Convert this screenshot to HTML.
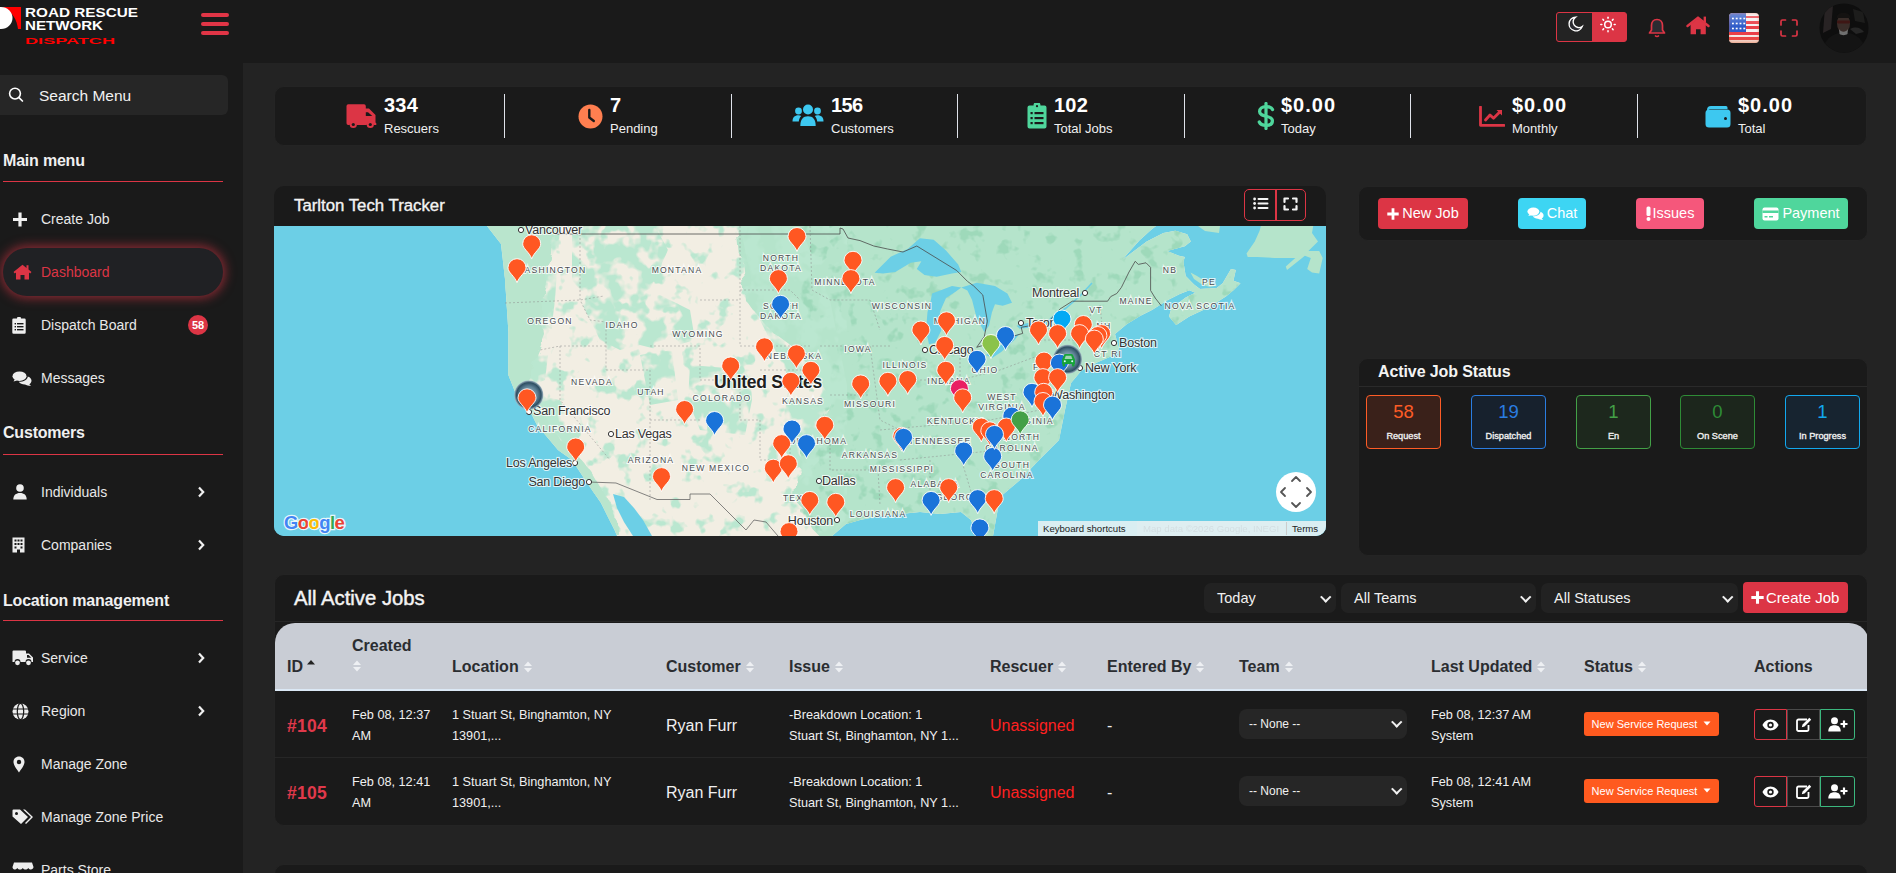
<!DOCTYPE html>
<html><head><meta charset="utf-8">
<style>
*{box-sizing:border-box;margin:0;padding:0}
html,body{width:1896px;height:873px;overflow:hidden;background:#232323;font-family:"Liberation Sans",sans-serif;color:#fff}
.abs{position:absolute}
#header{position:absolute;left:0;top:0;width:1896px;height:63px;background:#1a1a1a}
#sidebar{position:absolute;left:0;top:63px;width:243px;height:810px;background:#1a1a1a}
.card{position:absolute;background:#1a1a1a;border-radius:10px;border:1px solid #242424}
.si{position:absolute;left:41px;font-size:14px;color:#e8e8e8;line-height:16px;white-space:nowrap}
.sic{position:absolute;fill:#eaeaea}
.sh{position:absolute;left:3px;font-size:16px;font-weight:bold;color:#f0f0f0;line-height:18px;white-space:nowrap;letter-spacing:-0.2px}
.sl{position:absolute;left:3px;width:220px;height:1px;background:#dc3545}
.chev{position:absolute;left:197px;width:8px;height:12px;fill:none;stroke:#f0f0f0;stroke-width:2.2}

.vd{position:absolute;top:94px;width:1.2px;height:44px;background:#dfe2ea}
.sn{position:absolute;top:95px;font-size:20px;font-weight:bold;line-height:20px;color:#fff;white-space:nowrap;letter-spacing:0.2px}
.sb{position:absolute;top:121px;font-size:13px;line-height:16px;color:#f0f0f0;white-space:nowrap}
.btn{position:absolute;top:198px;height:31px;border-radius:4px;font-size:14.5px;line-height:31px;color:#fff;white-space:nowrap;display:flex;align-items:center;justify-content:center}
.jb{position:absolute;top:395px;width:75px;height:54px;border:1.5px solid;border-radius:4px;text-align:center}
.jb b{display:block;font-weight:normal;font-size:18.5px;line-height:18px;margin-top:7px}
.jb i{display:block;font-style:normal;font-size:9.2px;line-height:12px;margin-top:9px;color:#f0f0f0;font-weight:normal;-webkit-text-stroke:0.35px #f0f0f0}
.sel{position:absolute;top:583px;height:30px;background:#222;border-radius:7px;font-size:14.5px;line-height:30px;color:#f0f0f0;padding-left:13px;white-space:nowrap}
.sel:after,.tsel:after{content:"";position:absolute;right:7px;top:10px;width:5.5px;height:5.5px;border-right:2.2px solid #f0f0f0;border-bottom:2.2px solid #f0f0f0;transform:rotate(45deg)}
.th{position:absolute;top:658px;font-size:16px;font-weight:bold;line-height:18px;color:#2b2d31;white-space:nowrap}
.srt{position:absolute;width:10px;height:14px}
.srt2{display:inline-block;width:10px;height:14px;margin-left:4px;vertical-align:-2px}
.up{display:inline-block;width:10px;height:6px;margin-left:3px;vertical-align:7px}
.rid{position:absolute;left:287px;font-size:17.5px;letter-spacing:0.3px;font-weight:bold;line-height:22px;color:#e0394b;white-space:nowrap}
.r1{position:absolute;font-size:16px;line-height:20px;color:#f0f0f0;white-space:nowrap}
.r2{position:absolute;font-size:12.7px;line-height:21px;color:#f0f0f0;white-space:nowrap}
.tsel{position:absolute;left:1239px;width:168px;height:30px;background:#262626;border-radius:8px;font-size:12px;line-height:30px;color:#f0f0f0;padding-left:10px;white-space:nowrap}
.tsel:after{top:9px}
.stb{position:absolute;left:1584px;width:135px;height:24px;background:#ff5a1f;border-radius:3px;font-size:11px;line-height:24px;color:#fff;white-space:nowrap;text-align:center}
.act{position:absolute;left:1754px;width:101px;height:31px}
.ab{position:absolute;top:0;height:31px;border:1.2px solid;display:flex;align-items:center;justify-content:center}
.act .ab:first-child{border-radius:3px 0 0 3px}
.act .ab:last-child{border-radius:0 3px 3px 0}
</style></head><body>
<div id="header">
  <!-- logo -->
  <svg class="abs" style="left:0;top:0" width="150" height="50" viewBox="0 0 150 50">
    <path d="M2 7 L21 7 L21 29 L18 29 C17 20 13 12 2 7 Z" fill="#ff0000"/>
    <ellipse cx="1" cy="18" rx="11.5" ry="11" fill="#fff"/>
    <text x="25" y="17.3" font-family="Liberation Sans" font-weight="bold" font-size="13.6" fill="#fff" textLength="113" lengthAdjust="spacingAndGlyphs">ROAD RESCUE</text>
    <text x="25" y="30.3" font-family="Liberation Sans" font-weight="bold" font-size="13.6" fill="#fff" textLength="78" lengthAdjust="spacingAndGlyphs">NETWORK</text>
    <text x="25" y="43.5" font-family="Liberation Sans" font-weight="bold" font-size="9" fill="#ff0000" textLength="90" lengthAdjust="spacingAndGlyphs">DISPATCH</text>
  </svg>
  <!-- hamburger -->
  <div class="abs" style="left:201px;top:13px;width:28px;height:4px;background:#e03546;border-radius:2px"></div>
  <div class="abs" style="left:201px;top:22px;width:28px;height:4px;background:#e03546;border-radius:2px"></div>
  <div class="abs" style="left:201px;top:31px;width:28px;height:4px;background:#e03546;border-radius:2px"></div>
  <!-- theme toggle -->
  <div class="abs" style="left:1556px;top:12px;width:71px;height:30px;border:1px solid #dc3545;border-radius:3px;overflow:hidden;background:#dc3545">
    <div class="abs" style="left:0;top:0;width:35px;height:28px;background:#232323"></div>
    <svg class="abs" style="left:9px;top:2px" width="18" height="18" viewBox="0 0 18 18"><path d="M9.5 2.2 A6.8 6.8 0 1 0 16.2 11.5 A5.6 5.6 0 0 1 9.5 2.2 Z" fill="#2b2b31" stroke="#fff" stroke-width="1.4"/></svg>
    <svg class="abs" style="left:41px;top:2px" width="20" height="20" viewBox="0 0 20 20"><circle cx="10" cy="9.5" r="3.3" fill="none" stroke="#fff" stroke-width="1.5"/><g stroke="#fff" stroke-width="1.5" stroke-linecap="round"><path d="M10 2.3v1"/><path d="M10 15.7v1"/><path d="M2.8 9.5h1"/><path d="M16.2 9.5h1"/><path d="M4.9 4.4l.7.7"/><path d="M14.4 13.9l.7.7"/><path d="M4.9 14.6l.7-.7"/><path d="M14.4 5.1l.7-.7"/></g></svg>
  </div>
  <!-- bell -->
  <svg class="abs" style="left:1647px;top:17px" width="20" height="22" viewBox="0 0 20 22"><path d="M10 2.5 C6.3 2.5 4.5 5.2 4.5 8.5 L4.5 13 L2.5 16 L17.5 16 L15.5 13 L15.5 8.5 C15.5 5.2 13.7 2.5 10 2.5 Z" fill="#2b2b31" stroke="#dc3545" stroke-width="1.7" stroke-linejoin="round"/><path d="M8 18.5 Q10 20.5 12 18.5" fill="none" stroke="#dc3545" stroke-width="1.5"/></svg>
  <!-- home -->
  <svg class="abs" style="left:1686px;top:15px" width="24" height="21" viewBox="0 0 24 21"><path d="M1.5 11 L12 2.6 L22.5 11" fill="none" stroke="#dc3545" stroke-width="2.4" stroke-linecap="round" stroke-linejoin="round"/><path d="M4.6 9.2 L12 3.6 L19.8 9.2 V19.2 H14.6 V14.2 H10 V19.2 H4.6 Z" fill="#dc3545"/><rect x="17.6" y="1.6" width="2.4" height="6" fill="#dc3545"/></svg>
  <!-- flag -->
  <div class="abs" style="left:1729px;top:13px;width:30px;height:30px;border-radius:4px;overflow:hidden;background:repeating-linear-gradient(180deg,#f5f2f2 0 2.7px,#ea3f48 2.7px 5.4px)">
    <div class="abs" style="left:0;top:0;width:17px;height:19px;background:#2f5cc9"></div>
    <div class="abs" style="left:1.5px;top:3px;width:15px;height:14px;background:radial-gradient(circle,#fff 0.9px,transparent 1.2px) 0 0/3.8px 5px"></div>
    <div class="abs" style="left:0;top:0;width:30px;height:30px;background:linear-gradient(180deg,rgba(255,255,255,.3),rgba(255,255,255,0) 45%,rgba(0,0,0,0) 70%,rgba(230,110,60,.35));box-shadow:inset 0 0 3px rgba(230,100,60,.6)"></div>
  </div>
  <!-- fullscreen -->
  <svg class="abs" style="left:1780px;top:19px" width="18" height="18" viewBox="0 0 18 18"><path d="M1 6 V2.5 Q1 1 2.5 1 H5.5 M12.5 1 H15.5 Q17 1 17 2.5 V6 M17 12 V15.5 Q17 17 15.5 17 H12.5 M5.5 17 H2.5 Q1 17 1 15.5 V12" fill="none" stroke="#dc3545" stroke-width="1.7" stroke-linecap="round"/></svg>
  <!-- avatar -->
  <svg class="abs" style="left:1819px;top:3px" width="50" height="50" viewBox="0 0 50 50">
    <defs><clipPath id="av"><circle cx="25" cy="25" r="24.5"/></clipPath></defs>
    <g clip-path="url(#av)">
      <rect width="50" height="50" fill="#0e0e0e"/>
      <path d="M6 4 L14 2 L12 26 L4 30 Z" fill="#2b2627" opacity=".9"/>
      <path d="M34 6 L44 9 L46 20 L36 18 Z" fill="#1d1d1c"/>
      <path d="M3 50 C4 37 13 30 25 29 C37 30 46 37 47 50 Z" fill="#141414"/>
      <path d="M31 26 C37 23 42 25 45 29 L37 31 Z" fill="#262626"/>
      <ellipse cx="24.5" cy="20.5" rx="6.5" ry="9.5" fill="#3a2d29"/>
      <path d="M18 13 C19 8.5 30 8.5 31 13 L31 15 L18 15 Z" fill="#141211"/>
      <rect x="18" y="17.5" width="13" height="3" rx="1.2" fill="#3e1614"/>
      <path d="M20 26 C22 29.5 27 29.5 29 26 L28.5 31 C26.5 32.5 22.5 32.5 20.5 31 Z" fill="#707070"/>
    </g>
  </svg>
</div>
<div id="sidebar"></div>
<!-- sidebar content (absolute to page) -->
<div class="abs" style="left:0;top:75px;width:228px;height:40px;background:#262626;border-radius:0 6px 6px 0"></div>
<svg class="abs" style="left:8px;top:87px" width="16" height="15" viewBox="0 0 16 15"><circle cx="7" cy="6.6" r="5.4" fill="none" stroke="#fff" stroke-width="1.6"/><path d="M11 10.6 L14.4 14" stroke="#fff" stroke-width="1.7" stroke-linecap="round"/></svg>
<div class="abs" style="left:39px;top:87px;font-size:15.5px;line-height:18px;color:#f2f2f2;white-space:nowrap">Search Menu</div>

<div class="sh" style="top:152px">Main menu</div>
<div class="sl" style="top:181px"></div>

<svg class="sic" style="left:12px;top:212px" width="16" height="15" viewBox="0 0 16 15"><path d="M6.4 0.5h3.2v5.4H15v3.2H9.6v5.4H6.4V9.1H1V5.9h5.4z" fill="#f0f0f0"/></svg>
<div class="si" style="top:211px">Create Job</div>

<div class="abs" style="left:3px;top:248px;width:220px;height:48px;border-radius:24px;background:#202124;box-shadow:0 0 11px 2px rgba(220,53,69,.62)"></div>
<svg class="sic" style="left:13px;top:264px" width="19" height="16" viewBox="0 0 19 16"><path d="M9.5 0.8 L0.5 8 L1.8 9.5 L3 8.6 L3 15.5 L7.5 15.5 L7.5 11 L11.5 11 L11.5 15.5 L16 15.5 L16 8.6 L17.2 9.5 L18.5 8 L15.5 5.6 L15.5 1.2 L13.5 1.2 L13.5 4 Z" fill="#dc3545"/></svg>
<div class="si" style="top:264px;color:#dc3545">Dashboard</div>

<svg class="sic" style="left:12px;top:317px" width="14" height="17" viewBox="0 0 14 17"><path d="M5 1.5 A2 2 0 0 1 9 1.5 H12.5 A1.2 1.2 0 0 1 13.7 2.7 V15.6 A1.2 1.2 0 0 1 12.5 16.8 H1.5 A1.2 1.2 0 0 1 0.3 15.6 V2.7 A1.2 1.2 0 0 1 1.5 1.5 Z" fill="#eee"/><g fill="#1a1a1a"><rect x="2.6" y="6" width="1.4" height="1.4"/><rect x="5" y="6" width="6.5" height="1.4"/><rect x="2.6" y="9" width="1.4" height="1.4"/><rect x="5" y="9" width="6.5" height="1.4"/><rect x="2.6" y="12" width="1.4" height="1.4"/><rect x="5" y="12" width="6.5" height="1.4"/></g></svg>
<div class="si" style="top:317px">Dispatch Board</div>
<div class="abs" style="left:188px;top:315px;width:20px;height:20px;border-radius:10px;background:#dc3545;font-size:11px;font-weight:bold;line-height:20px;text-align:center;color:#fff">58</div>

<svg class="sic" style="left:12px;top:371px" width="20" height="15" viewBox="0 0 20 15"><ellipse cx="7.5" cy="5.2" rx="7" ry="4.8" fill="#eee"/><path d="M1.5 10.5 L3 8 L5 9.5 Z" fill="#eee"/><path d="M15.8 5.5 C18.5 6.5 19.7 8.2 19.5 10 C19.3 11.6 18.3 12.7 17.3 13.3 L19 15 C16.5 15 14.5 14.4 13 13.6 C10.5 13.7 8 12.5 6.8 10.8 C12 10.8 15.8 8.5 15.8 5.5 Z" fill="#eee"/></svg>
<div class="si" style="top:370px">Messages</div>

<div class="sh" style="top:424px">Customers</div>
<div class="sl" style="top:454px"></div>

<svg class="sic" style="left:13px;top:484px" width="14" height="16" viewBox="0 0 14 16"><circle cx="7" cy="4" r="3.8" fill="#eee"/><path d="M0.3 15.6 C0.3 11 3 9 7 9 C11 9 13.7 11 13.7 15.6 Z" fill="#eee"/></svg>
<div class="si" style="top:484px">Individuals</div>
<svg class="chev" style="top:486px" viewBox="0 0 8 12"><path d="M2 1.5 L6.2 6 L2 10.5"/></svg>

<svg class="sic" style="left:12px;top:537px" width="13" height="16" viewBox="0 0 13 16"><path d="M0.5 0.5 H12.5 V15.5 H8 V12.5 H5 V15.5 H0.5 Z" fill="#eee"/><g fill="#1a1a1a"><rect x="2.5" y="2.5" width="2" height="2"/><rect x="8.5" y="2.5" width="2" height="2"/><rect x="5.5" y="2.5" width="2" height="2"/><rect x="2.5" y="6" width="2" height="2"/><rect x="5.5" y="6" width="2" height="2"/><rect x="8.5" y="6" width="2" height="2"/><rect x="2.5" y="9.5" width="2" height="2"/><rect x="8.5" y="9.5" width="2" height="2"/></g></svg>
<div class="si" style="top:537px">Companies</div>
<svg class="chev" style="top:539px" viewBox="0 0 8 12"><path d="M2 1.5 L6.2 6 L2 10.5"/></svg>

<div class="sh" style="top:592px">Location management</div>
<div class="sl" style="top:620px"></div>

<svg class="sic" style="left:12px;top:650px" width="22" height="16" viewBox="0 0 22 16"><path d="M0.5 1.5 A1 1 0 0 1 1.5 0.5 H13 A1 1 0 0 1 14 1.5 V3.5 H17 L21 7.5 V12 H19.5 A3 3 0 0 0 13.5 12 H8.5 A3 3 0 0 0 2.5 12 H0.5 Z" fill="#eee"/><circle cx="5.5" cy="12.8" r="2.4" fill="#eee"/><circle cx="16.5" cy="12.8" r="2.4" fill="#eee"/><path d="M15 5 H16.6 L19.3 7.7 H15 Z" fill="#1a1a1a"/></svg>
<div class="si" style="top:650px">Service</div>
<svg class="chev" style="top:652px" viewBox="0 0 8 12"><path d="M2 1.5 L6.2 6 L2 10.5"/></svg>

<svg class="sic" style="left:12px;top:703px" width="17" height="17" viewBox="0 0 17 17"><circle cx="8.5" cy="8.5" r="8" fill="#eee"/><g fill="none" stroke="#1a1a1a" stroke-width="1.2"><ellipse cx="8.5" cy="8.5" rx="3.2" ry="8"/><path d="M0.5 6 H16.5 M0.5 11 H16.5"/></g></svg>
<div class="si" style="top:703px">Region</div>
<svg class="chev" style="top:705px" viewBox="0 0 8 12"><path d="M2 1.5 L6.2 6 L2 10.5"/></svg>

<svg class="sic" style="left:13px;top:756px" width="12" height="17" viewBox="0 0 12 17"><path d="M6 0.5 C9.2 0.5 11.5 2.8 11.5 6 C11.5 9.5 7.5 14 6 16.5 C4.5 14 0.5 9.5 0.5 6 C0.5 2.8 2.8 0.5 6 0.5 Z" fill="#eee"/><circle cx="6" cy="6" r="2.2" fill="#1a1a1a"/></svg>
<div class="si" style="top:756px">Manage Zone</div>

<svg class="sic" style="left:12px;top:809px" width="22" height="16" viewBox="0 0 22 16"><path d="M0.5 1.5 A1 1 0 0 1 1.5 0.5 H8 L16 8 L9 15 L0.5 7.5 Z" fill="#eee"/><circle cx="4.5" cy="4.5" r="1.5" fill="#1a1a1a"/><path d="M11 0.5 H13 L21 8 L14 15 L13 14 L19 8 Z" fill="#eee"/></svg>
<div class="si" style="top:809px">Manage Zone Price</div>

<svg class="sic" style="left:12px;top:862px" width="22" height="14" viewBox="0 0 22 14"><path d="M2 0.5 H20 L21.5 5 C21.5 6.5 20 7.5 19 7.5 C18 7.5 17 7 16.3 6 C15.5 7 14.5 7.5 13.5 7.5 C12.5 7.5 11.5 7 10.8 6 C10 7 9 7.5 8 7.5 C7 7.5 6 7 5.3 6 C4.5 7 3.5 7.5 2.5 7.5 C1.5 7.5 0.5 6.5 0.5 5 Z" fill="#eee"/></svg>
<div class="si" style="top:862px">Parts Store</div>

<!-- MAIN -->
<!-- STATS -->
<div class="card" style="left:274px;top:86px;width:1593px;height:60px"></div>
<div class="vd" style="left:504px"></div><div class="vd" style="left:731px"></div><div class="vd" style="left:957px"></div><div class="vd" style="left:1184px"></div><div class="vd" style="left:1410px"></div><div class="vd" style="left:1637px"></div>

<svg class="abs" style="left:346px;top:104px" width="31" height="25" viewBox="0 0 31 25"><path d="M0.5 2 A1.8 1.8 0 0 1 2.3 0.3 H18 A1.8 1.8 0 0 1 19.8 2 V4.5 H23 L29.5 11 V18.5 L30.3 19.2 V21 H28 A4 4 0 0 0 20.5 21 H11 A4 4 0 0 0 3.5 21 H2.3 A1.8 1.8 0 0 1 0.5 19.2 Z" fill="#dc3545"/><circle cx="7.3" cy="20.5" r="3.6" fill="#dc3545"/><circle cx="24.3" cy="20.5" r="3.6" fill="#dc3545"/><circle cx="7.3" cy="20.5" r="1.6" fill="#1a1a1a"/><circle cx="24.3" cy="20.5" r="1.6" fill="#1a1a1a"/><path d="M19.8 8.3 H22 L26.3 12 H19.8 Z" fill="#1a1a1a"/></svg>
<div class="sn" style="left:384px">334</div><div class="sb" style="left:384px">Rescuers</div>

<svg class="abs" style="left:578px;top:104px" width="25" height="25" viewBox="0 0 25 25"><circle cx="12.5" cy="12.5" r="12" fill="#ff7f50"/><path d="M11.3 6 V13.5 L15.8 17" fill="none" stroke="#1a1a1a" stroke-width="2.4" stroke-linecap="round" stroke-linejoin="round"/></svg>
<div class="sn" style="left:610px">7</div><div class="sb" style="left:610px">Pending</div>

<svg class="abs" style="left:792px;top:104px" width="32" height="23" viewBox="0 0 32 23"><circle cx="16" cy="5.5" r="5" fill="#3dc8f0"/><circle cx="6.5" cy="7" r="3.4" fill="#3dc8f0"/><circle cx="25.5" cy="7" r="3.4" fill="#3dc8f0"/><path d="M8.3 22 C8.3 15.5 11 12.3 16 12.3 C21 12.3 23.7 15.5 23.7 22 Z" fill="#3dc8f0"/><path d="M0.5 17.5 C0.5 13.5 2.5 11.3 6.5 11.3 C7.7 11.3 8.5 11.6 9.2 12 C7.6 13.8 7 15.5 6.8 17.5 Z" fill="#3dc8f0"/><path d="M31.5 17.5 C31.5 13.5 29.5 11.3 25.5 11.3 C24.3 11.3 23.5 11.6 22.8 12 C24.4 13.8 25 15.5 25.2 17.5 Z" fill="#3dc8f0"/></svg>
<div class="sn" style="left:831px;letter-spacing:-0.6px">156</div><div class="sb" style="left:831px">Customers</div>

<svg class="abs" style="left:1027px;top:103px" width="20" height="26" viewBox="0 0 20 26"><path d="M6.5 2.5 A3.5 3.5 0 0 1 13.5 2.5 H17.5 A2 2 0 0 1 19.5 4.5 V23.5 A2 2 0 0 1 17.5 25.5 H2.5 A2 2 0 0 1 0.5 23.5 V4.5 A2 2 0 0 1 2.5 2.5 Z" fill="#4fd69c"/><g fill="#1a1a1a"><circle cx="10" cy="3.2" r="1.1"/><rect x="3.5" y="9" width="2.2" height="2.2"/><rect x="7.5" y="9" width="9" height="2.2"/><rect x="3.5" y="14" width="2.2" height="2.2"/><rect x="7.5" y="14" width="9" height="2.2"/><rect x="3.5" y="19" width="2.2" height="2.2"/><rect x="7.5" y="19" width="9" height="2.2"/></g></svg>
<div class="sn" style="left:1054px">102</div><div class="sb" style="left:1054px">Total Jobs</div>

<svg class="abs" style="left:1257px;top:102px" width="18" height="28" viewBox="0 0 18 28"><path d="M9 1.5 V26.5" stroke="#4fd69c" stroke-width="3.2" stroke-linecap="round"/><path d="M15.5 7.5 C14.5 5.5 12 4.7 9 4.7 C5 4.7 2.6 6.6 2.6 9.5 C2.6 16 15.4 12.5 15.4 18.8 C15.4 21.8 12.8 23.4 9 23.4 C5.8 23.4 3.3 22.3 2.3 20" fill="none" stroke="#4fd69c" stroke-width="3.3" stroke-linecap="round"/></svg>
<div class="sn" style="left:1281px;letter-spacing:1px">$0.00</div><div class="sb" style="left:1281px">Today</div>

<svg class="abs" style="left:1479px;top:106px" width="26" height="21" viewBox="0 0 26 21"><path d="M1.5 1 V19.3 H25" fill="none" stroke="#dc3545" stroke-width="2.8" stroke-linecap="round" stroke-linejoin="round"/><path d="M6.5 14 L11 9 L14.5 12.3 L21 5.8" fill="none" stroke="#dc3545" stroke-width="2.8" stroke-linecap="round" stroke-linejoin="round"/><path d="M17.5 4 H23 V9.5 Z" fill="#dc3545"/></svg>
<div class="sn" style="left:1512px;letter-spacing:1px">$0.00</div><div class="sb" style="left:1512px">Monthly</div>

<svg class="abs" style="left:1705px;top:105px" width="26" height="23" viewBox="0 0 26 23"><path d="M2 5 Q2 1 6 1 H21 Q22.5 1 22.5 2.5 V4 H5 Q3.5 4 3.5 5.5" fill="#3dc8f0"/><rect x="0.5" y="4.5" width="25" height="18" rx="3.5" fill="#3dc8f0"/><circle cx="20.5" cy="13.5" r="1.5" fill="#1a1a1a"/></svg>
<div class="sn" style="left:1738px;letter-spacing:1px">$0.00</div><div class="sb" style="left:1738px">Total</div>

<!-- MAP CARD -->
<div class="card" style="left:274px;top:186px;width:1052px;height:350px;overflow:hidden;border:none">
  <div class="abs" style="left:20px;top:10px;font-size:16.8px;line-height:20px;color:#f4f4f4;white-space:nowrap;-webkit-text-stroke:0.35px #f4f4f4">Tarlton Tech Tracker</div>
  <div class="abs" style="left:970px;top:3px;width:62px;height:32px;border:1.5px solid #dc3545;border-radius:5px"></div>
  <div class="abs" style="left:1001px;top:3px;width:1.5px;height:32px;background:#dc3545"></div>
  <svg class="abs" style="left:979px;top:11px" width="16" height="13" viewBox="0 0 16 13"><g fill="#f4f4f4"><circle cx="1.6" cy="2" r="1.4"/><circle cx="1.6" cy="6.5" r="1.4"/><circle cx="1.6" cy="11" r="1.4"/><rect x="4.5" y="1" width="11" height="2" rx="1"/><rect x="4.5" y="5.5" width="11" height="2" rx="1"/><rect x="4.5" y="10" width="11" height="2" rx="1"/></g></svg>
  <svg class="abs" style="left:1009px;top:11px" width="15" height="14" viewBox="0 0 15 14"><path d="M1.5 5 V1.5 H5 M10 1.5 H13.5 V5 M13.5 9 V12.5 H10 M5 12.5 H1.5 V9" fill="none" stroke="#f4f4f4" stroke-width="2.2" stroke-linecap="round" stroke-linejoin="round"/></svg>
  <div id="map" class="abs" style="left:0;top:40px;width:1052px;height:310px;background:#6ccfe6;overflow:hidden">
    <svg width="1052" height="310" viewBox="274 226 1052 310" style="position:absolute;left:0;top:0">
<defs><clipPath id="landclip"><path d="M487.0 226.0 L1156.0 226.0 L1151.5 229.6 L1139.6 240.3 L1127.7 253.4 L1113.4 271.3 L1100.0 279.0 L1092.0 282.0 L1115.7 265.3 L1132.4 252.2 L1146.7 241.5 L1163.4 233.1 L1175.3 230.8 L1187.2 234.3 L1190.8 241.5 L1184.8 246.3 L1167.0 251.0 L1178.9 255.8 L1184.8 257.0 L1183.4 261.7 L1185.7 276.0 L1194.0 284.4 L1200.0 289.0 L1216.7 288.0 L1222.7 283.2 L1231.0 268.9 L1235.8 270.0 L1233.4 280.8 L1240.5 283.2 L1233.4 290.3 L1226.2 296.3 L1209.6 307.0 L1189.3 316.5 L1176.2 324.9 L1169.0 316.5 L1171.4 308.2 L1185.7 297.5 L1195.3 292.7 L1189.3 290.3 L1179.8 293.9 L1167.9 299.9 L1160.7 304.6 L1152.0 310.0 L1140.0 316.0 L1127.0 324.0 L1115.0 334.0 L1119.0 349.0 L1112.0 356.0 L1098.0 362.0 L1081.0 371.0 L1071.0 383.0 L1065.0 410.0 L1059.0 440.0 L1053.0 446.0 L1040.0 459.0 L1020.0 480.0 L1000.0 497.0 L993.0 536.0 L977.0 536.0 L971.0 520.0 L961.0 512.0 L940.0 514.0 L920.0 512.0 L900.0 514.0 L880.0 516.0 L860.0 520.0 L846.0 524.0 L832.0 536.0 L617.0 536.0 L615.0 531.0 L601.0 503.0 L586.5 482.0 L572.0 460.0 L558.0 450.0 L537.0 425.0 L530.0 411.0 L515.5 393.0 L508.4 375.0 L508.4 332.0 L505.0 279.0 L501.0 244.0 Z"/></clipPath><clipPath id="mtn"><path d="M572 226 L655 226 L668 250 L650 290 L690 310 L695 340 L660 350 L640 345 L620 350 L600 340 L585 310 L572 280 Z"/><path d="M690 365 L750 370 L752 400 L745 435 L700 430 L688 400 Z"/><path d="M640 355 L672 350 L678 400 L650 405 Z"/><path d="M540 395 L560 400 L580 440 L575 455 L555 450 L538 420 Z"/><path d="M740 226 L800 226 L830 300 L850 400 L830 450 L800 480 L780 440 L790 380 L760 320 Z"/><path d="M505 226 L560 226 L555 300 L545 380 L520 390 L505 300 Z"/></clipPath><filter id="motD" x="0" y="0" width="1" height="1" color-interpolation-filters="sRGB"><feTurbulence type="fractalNoise" baseFrequency="0.07" numOctaves="3" seed="21"/><feColorMatrix type="matrix" values="0 0 0 0 0.62  0 0 0 0 0.85  0 0 0 0 0.73  0 0 0 7 -4.1"/></filter><filter id="motS" x="0" y="0" width="1" height="1" color-interpolation-filters="sRGB"><feTurbulence type="fractalNoise" baseFrequency="0.06" numOctaves="3" seed="11"/><feColorMatrix type="matrix" values="0 0 0 0 0.73  0 0 0 0 0.905  0 0 0 0 0.815  0 0 0 8 -4.6"/></filter><filter id="mot" x="0" y="0" width="1" height="1" color-interpolation-filters="sRGB"><feTurbulence type="fractalNoise" baseFrequency="0.05" numOctaves="3" seed="4"/><feColorMatrix type="matrix" values="0 0 0 0 0.73  0 0 0 0 0.905  0 0 0 0 0.815  0 0 0 7 -3.0"/></filter><filter id="mot2" x="-0.1" y="-0.1" width="1.2" height="1.2"><feTurbulence type="fractalNoise" baseFrequency="0.06" numOctaves="2" seed="9" result="n"/><feDisplacementMap in="SourceGraphic" in2="n" scale="16"/></filter><radialGradient id="clg" cx="0.5" cy="0.5" r="0.5"><stop offset="0" stop-color="#b7d0dc"/><stop offset="0.6" stop-color="#5c7f93"/><stop offset="0.85" stop-color="#2e4f63"/><stop offset="1" stop-color="#9fb6c2"/></radialGradient></defs>
<rect x="274" y="226" width="1052" height="310" fill="#6ccfe6"/>
<path d="M487.0 226.0 L1156.0 226.0 L1151.5 229.6 L1139.6 240.3 L1127.7 253.4 L1113.4 271.3 L1100.0 279.0 L1092.0 282.0 L1115.7 265.3 L1132.4 252.2 L1146.7 241.5 L1163.4 233.1 L1175.3 230.8 L1187.2 234.3 L1190.8 241.5 L1184.8 246.3 L1167.0 251.0 L1178.9 255.8 L1184.8 257.0 L1183.4 261.7 L1185.7 276.0 L1194.0 284.4 L1200.0 289.0 L1216.7 288.0 L1222.7 283.2 L1231.0 268.9 L1235.8 270.0 L1233.4 280.8 L1240.5 283.2 L1233.4 290.3 L1226.2 296.3 L1209.6 307.0 L1189.3 316.5 L1176.2 324.9 L1169.0 316.5 L1171.4 308.2 L1185.7 297.5 L1195.3 292.7 L1189.3 290.3 L1179.8 293.9 L1167.9 299.9 L1160.7 304.6 L1152.0 310.0 L1140.0 316.0 L1127.0 324.0 L1115.0 334.0 L1119.0 349.0 L1112.0 356.0 L1098.0 362.0 L1081.0 371.0 L1071.0 383.0 L1065.0 410.0 L1059.0 440.0 L1053.0 446.0 L1040.0 459.0 L1020.0 480.0 L1000.0 497.0 L993.0 536.0 L977.0 536.0 L971.0 520.0 L961.0 512.0 L940.0 514.0 L920.0 512.0 L900.0 514.0 L880.0 516.0 L860.0 520.0 L846.0 524.0 L832.0 536.0 L617.0 536.0 L615.0 531.0 L601.0 503.0 L586.5 482.0 L572.0 460.0 L558.0 450.0 L537.0 425.0 L530.0 411.0 L515.5 393.0 L508.4 375.0 L508.4 332.0 L505.0 279.0 L501.0 244.0 Z" fill="#f2eee3"/>
<g clip-path="url(#landclip)">
<path d="M736.0 200.0 L1360.0 200.0 L1360.0 570.0 L822.0 570.0 L818.0 536.0 L796.0 500.0 L800.0 450.0 L826.0 410.0 L828.0 395.0 L800.0 352.0 L770.0 330.0 L745.0 300.0 L738.0 226.0 Z" fill="#b5e4cb" filter="url(#mot2)"/>
<rect x="487" y="226" width="360" height="310" fill="#fff" filter="url(#motS)"/>
<rect x="800" y="226" width="526" height="310" fill="#fff" filter="url(#motD)"/>
<g clip-path="url(#mtn)"><rect x="487" y="226" width="360" height="310" fill="#fff" filter="url(#mot)"/></g>
<path d="M487 226 L560 226 L552 250 L545 275 L540 300 L545 335 L535 360 L528 380 L535 400 L548 420 L560 440 L575 452 L590 470 L602 490 L612 510 L620 536 L600 536 L586 500 L570 478 L550 462 L530 440 L515 415 L505 390 L500 300 Z" fill="#b9e5cd" filter="url(#mot2)"/>
</g>
<path d="M1246.5 253.4 L1254.8 241.5 L1259.6 230.8 L1260.8 226.0 L1313.2 226.0 L1312.0 233.0 L1318.0 241.5 L1308.4 251.0 L1319.2 251.0 L1322.7 258.0 L1319.2 273.6 L1312.0 272.5 L1307.2 268.9 L1310.8 258.0 L1304.9 255.8 L1287.0 270.0 L1285.8 266.5 L1295.3 258.0 L1275.0 258.0 L1257.2 257.0 L1247.7 257.0 Z" fill="#b5e4cb"/>
<path d="M1198.0 226.0 L1220.0 226.0 L1219.0 233.0 L1205.0 231.0 Z" fill="#b5e4cb"/>
<path d="M1190.5 272.5 L1197.0 276.0 L1205.0 281.0 L1212.0 283.0 L1217.0 285.6 L1210.0 287.0 L1202.0 284.5 L1194.0 279.0 Z" fill="#b5e4cb"/>
<path d="M613.0 494.0 L624.0 497.0 L634.0 508.0 L643.0 520.0 L652.0 536.0 L633.0 536.0 L624.0 522.0 L617.0 508.0 Z" fill="#6ccfe6"/>
<path d="M874.6 272.8 L890.7 256.7 L907.6 249.0 L919.9 238.3 L933.7 239.8 L946.0 250.6 L958.2 264.4 L961.3 272.0 L952.0 273.6 L936.7 276.7 L924.5 275.0 L916.8 269.0 L921.4 261.3 L910.7 262.8 L895.3 272.0 L883.0 273.6 Z" fill="#6ccfe6"/>
<path d="M932.1 293.5 L952.0 285.9 L961.3 287.4 L955.2 292.0 L946.0 298.1 L939.8 312.0 L941.3 330.4 L935.2 342.7 L929.0 344.2 L926.0 330.4 L927.5 312.0 L930.6 301.2 Z" fill="#6ccfe6"/>
<path d="M961.3 287.4 L976.7 282.8 L995.0 285.9 L1007.4 293.5 L1012.0 302.7 L1002.7 305.8 L995.0 304.3 L992.0 312.0 L989.0 325.8 L984.3 331.9 L976.7 318.0 L972.0 299.7 L967.4 290.5 Z" fill="#6ccfe6"/>
<path d="M985.9 354.9 L998.0 347.3 L1013.5 336.5 L1019.6 333.4 L1015.0 339.6 L1001.2 351.9 L992.0 358.0 Z" fill="#6ccfe6"/>
<path d="M1016.6 325.8 L1028.8 322.7 L1044.2 321.2 L1053.4 318.1 L1050.3 324.2 L1033.4 327.3 L1019.6 328.8 Z" fill="#6ccfe6"/>
<path d="M1050 319 L1066 308 L1080 296 L1092 283" fill="none" stroke="#6ccfe6" stroke-width="1.6"/>
<path d="M555 234 L840 234 L840 228 L843 229 L848 238 L860 240.6 L873.8 246 L887.6 249 L903 252 L916.8 246 L956.7 270.5 L967.4 281.3 L973.6 285.9 L982.8 295 L987.4 321.2 L984.3 336.5 L976.7 347.3 L1022.7 333.4 L1021.2 327.3 L1034 325 L1050 320 L1060 309 L1072.3 301.2 L1107.6 301.2 L1110.7 296.6 L1116.8 293.5 L1121.4 287.4 L1129 272 L1135.2 261.3 L1138.3 264.4 L1146 262.8 L1150.6 267.4 L1150.6 290.5 L1155.2 298 L1161.3 305.8" fill="none" stroke="#4a4a4a" stroke-width="0.8"/>
<path d="M589 482 L616 483 L657 499.5 L690 499.5 L690 494 L710 494 L730 514 L746 530 L754 520 L766 522 L778 536" fill="none" stroke="#666" stroke-width="0.8"/>
<path d="M505 303 L580 300 L604 296" fill="none" stroke="#8a8a8a" stroke-width="0.7" stroke-dasharray="2 2" opacity="0.7"/>
<path d="M580 226 L580 300 L590 320 L606 322 L606 370" fill="none" stroke="#8a8a8a" stroke-width="0.7" stroke-dasharray="2 2" opacity="0.7"/>
<path d="M606 346 L560 346 L540 350" fill="none" stroke="#8a8a8a" stroke-width="0.7" stroke-dasharray="2 2" opacity="0.7"/>
<path d="M560 346 L560 400 L610 460" fill="none" stroke="#8a8a8a" stroke-width="0.7" stroke-dasharray="2 2" opacity="0.7"/>
<path d="M606 370 L650 370 L650 420" fill="none" stroke="#8a8a8a" stroke-width="0.7" stroke-dasharray="2 2" opacity="0.7"/>
<path d="M650 346 L700 346 L700 380 L740 380 L740 420 L760 420" fill="none" stroke="#8a8a8a" stroke-width="0.7" stroke-dasharray="2 2" opacity="0.7"/>
<path d="M740 226 L740 346" fill="none" stroke="#8a8a8a" stroke-width="0.7" stroke-dasharray="2 2" opacity="0.7"/>
<path d="M700 300 L740 300" fill="none" stroke="#8a8a8a" stroke-width="0.7" stroke-dasharray="2 2" opacity="0.7"/>
<path d="M740 290 L790 290 L800 300" fill="none" stroke="#8a8a8a" stroke-width="0.7" stroke-dasharray="2 2" opacity="0.7"/>
<path d="M740 346 L810 346" fill="none" stroke="#8a8a8a" stroke-width="0.7" stroke-dasharray="2 2" opacity="0.7"/>
<path d="M760 370 L820 370" fill="none" stroke="#8a8a8a" stroke-width="0.7" stroke-dasharray="2 2" opacity="0.7"/>
<path d="M700 420 L650 420 L650 500" fill="none" stroke="#8a8a8a" stroke-width="0.7" stroke-dasharray="2 2" opacity="0.7"/>
<path d="M760 420 L760 460 L790 460 L790 440 L830 440" fill="none" stroke="#8a8a8a" stroke-width="0.7" stroke-dasharray="2 2" opacity="0.7"/>
<path d="M830 395 L870 395" fill="none" stroke="#8a8a8a" stroke-width="0.7" stroke-dasharray="2 2" opacity="0.7"/>
<path d="M810 226 L812 290 L830 300 L870 300 L880 330" fill="none" stroke="#8a8a8a" stroke-width="0.7" stroke-dasharray="2 2" opacity="0.7"/>
<path d="M820 346 L890 346" fill="none" stroke="#8a8a8a" stroke-width="0.7" stroke-dasharray="2 2" opacity="0.7"/>
<path d="M870 346 L880 420 L900 430" fill="none" stroke="#8a8a8a" stroke-width="0.7" stroke-dasharray="2 2" opacity="0.7"/>
<path d="M830 440 L830 470 L870 470" fill="none" stroke="#8a8a8a" stroke-width="0.7" stroke-dasharray="2 2" opacity="0.7"/>
<path d="M880 430 L990 420 L1040 410" fill="none" stroke="#8a8a8a" stroke-width="0.7" stroke-dasharray="2 2" opacity="0.7"/>
<path d="M900 460 L1000 450" fill="none" stroke="#8a8a8a" stroke-width="0.7" stroke-dasharray="2 2" opacity="0.7"/>
<path d="M920 380 L960 380 L1000 370 L1040 355" fill="none" stroke="#8a8a8a" stroke-width="0.7" stroke-dasharray="2 2" opacity="0.7"/>
<path d="M960 346 L960 410" fill="none" stroke="#8a8a8a" stroke-width="0.7" stroke-dasharray="2 2" opacity="0.7"/>
<path d="M1040 340 L1090 340" fill="none" stroke="#8a8a8a" stroke-width="0.7" stroke-dasharray="2 2" opacity="0.7"/>
<path d="M1090 310 L1092 345" fill="none" stroke="#8a8a8a" stroke-width="0.7" stroke-dasharray="2 2" opacity="0.7"/>
<path d="M1100 305 L1104 345" fill="none" stroke="#8a8a8a" stroke-width="0.7" stroke-dasharray="2 2" opacity="0.7"/>
<path d="M878 470 L880 505" fill="none" stroke="#8a8a8a" stroke-width="0.7" stroke-dasharray="2 2" opacity="0.7"/>
<path d="M930 460 L930 505" fill="none" stroke="#8a8a8a" stroke-width="0.7" stroke-dasharray="2 2" opacity="0.7"/>
<path d="M960 455 L975 505" fill="none" stroke="#8a8a8a" stroke-width="0.7" stroke-dasharray="2 2" opacity="0.7"/>
<text x="551" y="273" font-family="Liberation Sans" font-size="8.6" font-weight="normal" fill="#4a4d50" letter-spacing="1.2" text-anchor="middle" stroke="#fff" stroke-width="2.2" stroke-opacity="0.75" paint-order="stroke">WASHINGTON</text>
<text x="677" y="273" font-family="Liberation Sans" font-size="8.6" font-weight="normal" fill="#4a4d50" letter-spacing="1.2" text-anchor="middle" stroke="#fff" stroke-width="2.2" stroke-opacity="0.75" paint-order="stroke">MONTANA</text>
<text x="781" y="261" font-family="Liberation Sans" font-size="8.6" font-weight="normal" fill="#4a4d50" letter-spacing="1.2" text-anchor="middle" stroke="#fff" stroke-width="2.2" stroke-opacity="0.75" paint-order="stroke">NORTH</text>
<text x="781" y="271" font-family="Liberation Sans" font-size="8.6" font-weight="normal" fill="#4a4d50" letter-spacing="1.2" text-anchor="middle" stroke="#fff" stroke-width="2.2" stroke-opacity="0.75" paint-order="stroke">DAKOTA</text>
<text x="781" y="309" font-family="Liberation Sans" font-size="8.6" font-weight="normal" fill="#4a4d50" letter-spacing="1.2" text-anchor="middle" stroke="#fff" stroke-width="2.2" stroke-opacity="0.75" paint-order="stroke">SOUTH</text>
<text x="781" y="319" font-family="Liberation Sans" font-size="8.6" font-weight="normal" fill="#4a4d50" letter-spacing="1.2" text-anchor="middle" stroke="#fff" stroke-width="2.2" stroke-opacity="0.75" paint-order="stroke">DAKOTA</text>
<text x="845" y="285" font-family="Liberation Sans" font-size="8.6" font-weight="normal" fill="#4a4d50" letter-spacing="1.2" text-anchor="middle" stroke="#fff" stroke-width="2.2" stroke-opacity="0.75" paint-order="stroke">MINNESOTA</text>
<text x="550" y="324" font-family="Liberation Sans" font-size="8.6" font-weight="normal" fill="#4a4d50" letter-spacing="1.2" text-anchor="middle" stroke="#fff" stroke-width="2.2" stroke-opacity="0.75" paint-order="stroke">OREGON</text>
<text x="622" y="328" font-family="Liberation Sans" font-size="8.6" font-weight="normal" fill="#4a4d50" letter-spacing="1.2" text-anchor="middle" stroke="#fff" stroke-width="2.2" stroke-opacity="0.75" paint-order="stroke">IDAHO</text>
<text x="698" y="337" font-family="Liberation Sans" font-size="8.6" font-weight="normal" fill="#4a4d50" letter-spacing="1.2" text-anchor="middle" stroke="#fff" stroke-width="2.2" stroke-opacity="0.75" paint-order="stroke">WYOMING</text>
<text x="902" y="309" font-family="Liberation Sans" font-size="8.6" font-weight="normal" fill="#4a4d50" letter-spacing="1.2" text-anchor="middle" stroke="#fff" stroke-width="2.2" stroke-opacity="0.75" paint-order="stroke">WISCONSIN</text>
<text x="858" y="352" font-family="Liberation Sans" font-size="8.6" font-weight="normal" fill="#4a4d50" letter-spacing="1.2" text-anchor="middle" stroke="#fff" stroke-width="2.2" stroke-opacity="0.75" paint-order="stroke">IOWA</text>
<text x="794" y="359" font-family="Liberation Sans" font-size="8.6" font-weight="normal" fill="#4a4d50" letter-spacing="1.2" text-anchor="middle" stroke="#fff" stroke-width="2.2" stroke-opacity="0.75" paint-order="stroke">NEBRASKA</text>
<text x="960" y="324" font-family="Liberation Sans" font-size="8.6" font-weight="normal" fill="#4a4d50" letter-spacing="1.2" text-anchor="middle" stroke="#fff" stroke-width="2.2" stroke-opacity="0.75" paint-order="stroke">MICHIGAN</text>
<text x="905" y="368" font-family="Liberation Sans" font-size="8.6" font-weight="normal" fill="#4a4d50" letter-spacing="1.2" text-anchor="middle" stroke="#fff" stroke-width="2.2" stroke-opacity="0.75" paint-order="stroke">ILLINOIS</text>
<text x="949" y="384" font-family="Liberation Sans" font-size="8.6" font-weight="normal" fill="#4a4d50" letter-spacing="1.2" text-anchor="middle" stroke="#fff" stroke-width="2.2" stroke-opacity="0.75" paint-order="stroke">INDIANA</text>
<text x="985" y="373" font-family="Liberation Sans" font-size="8.6" font-weight="normal" fill="#4a4d50" letter-spacing="1.2" text-anchor="middle" stroke="#fff" stroke-width="2.2" stroke-opacity="0.75" paint-order="stroke">OHIO</text>
<text x="592" y="385" font-family="Liberation Sans" font-size="8.6" font-weight="normal" fill="#4a4d50" letter-spacing="1.2" text-anchor="middle" stroke="#fff" stroke-width="2.2" stroke-opacity="0.75" paint-order="stroke">NEVADA</text>
<text x="651" y="395" font-family="Liberation Sans" font-size="8.6" font-weight="normal" fill="#4a4d50" letter-spacing="1.2" text-anchor="middle" stroke="#fff" stroke-width="2.2" stroke-opacity="0.75" paint-order="stroke">UTAH</text>
<text x="722" y="401" font-family="Liberation Sans" font-size="8.6" font-weight="normal" fill="#4a4d50" letter-spacing="1.2" text-anchor="middle" stroke="#fff" stroke-width="2.2" stroke-opacity="0.75" paint-order="stroke">COLORADO</text>
<text x="803" y="404" font-family="Liberation Sans" font-size="8.6" font-weight="normal" fill="#4a4d50" letter-spacing="1.2" text-anchor="middle" stroke="#fff" stroke-width="2.2" stroke-opacity="0.75" paint-order="stroke">KANSAS</text>
<text x="870" y="407" font-family="Liberation Sans" font-size="8.6" font-weight="normal" fill="#4a4d50" letter-spacing="1.2" text-anchor="middle" stroke="#fff" stroke-width="2.2" stroke-opacity="0.75" paint-order="stroke">MISSOURI</text>
<text x="1002" y="400" font-family="Liberation Sans" font-size="8.6" font-weight="normal" fill="#4a4d50" letter-spacing="1.2" text-anchor="middle" stroke="#fff" stroke-width="2.2" stroke-opacity="0.75" paint-order="stroke">WEST</text>
<text x="1002" y="410" font-family="Liberation Sans" font-size="8.6" font-weight="normal" fill="#4a4d50" letter-spacing="1.2" text-anchor="middle" stroke="#fff" stroke-width="2.2" stroke-opacity="0.75" paint-order="stroke">VIRGINIA</text>
<text x="955" y="424" font-family="Liberation Sans" font-size="8.6" font-weight="normal" fill="#4a4d50" letter-spacing="1.2" text-anchor="middle" stroke="#fff" stroke-width="2.2" stroke-opacity="0.75" paint-order="stroke">KENTUCKY</text>
<text x="1030" y="424" font-family="Liberation Sans" font-size="8.6" font-weight="normal" fill="#4a4d50" letter-spacing="1.2" text-anchor="middle" stroke="#fff" stroke-width="2.2" stroke-opacity="0.75" paint-order="stroke">VIRGINIA</text>
<text x="560" y="432" font-family="Liberation Sans" font-size="8.6" font-weight="normal" fill="#4a4d50" letter-spacing="1.2" text-anchor="middle" stroke="#fff" stroke-width="2.2" stroke-opacity="0.75" paint-order="stroke">CALIFORNIA</text>
<text x="651" y="463" font-family="Liberation Sans" font-size="8.6" font-weight="normal" fill="#4a4d50" letter-spacing="1.2" text-anchor="middle" stroke="#fff" stroke-width="2.2" stroke-opacity="0.75" paint-order="stroke">ARIZONA</text>
<text x="716" y="471" font-family="Liberation Sans" font-size="8.6" font-weight="normal" fill="#4a4d50" letter-spacing="1.2" text-anchor="middle" stroke="#fff" stroke-width="2.2" stroke-opacity="0.75" paint-order="stroke">NEW MEXICO</text>
<text x="818" y="444" font-family="Liberation Sans" font-size="8.6" font-weight="normal" fill="#4a4d50" letter-spacing="1.2" text-anchor="middle" stroke="#fff" stroke-width="2.2" stroke-opacity="0.75" paint-order="stroke">OKLAHOMA</text>
<text x="940" y="444" font-family="Liberation Sans" font-size="8.6" font-weight="normal" fill="#4a4d50" letter-spacing="1.2" text-anchor="middle" stroke="#fff" stroke-width="2.2" stroke-opacity="0.75" paint-order="stroke">TENNESSEE</text>
<text x="1022" y="440" font-family="Liberation Sans" font-size="8.6" font-weight="normal" fill="#4a4d50" letter-spacing="1.2" text-anchor="middle" stroke="#fff" stroke-width="2.2" stroke-opacity="0.75" paint-order="stroke">NORTH</text>
<text x="1012" y="451" font-family="Liberation Sans" font-size="8.6" font-weight="normal" fill="#4a4d50" letter-spacing="1.2" text-anchor="middle" stroke="#fff" stroke-width="2.2" stroke-opacity="0.75" paint-order="stroke">CAROLINA</text>
<text x="870" y="458" font-family="Liberation Sans" font-size="8.6" font-weight="normal" fill="#4a4d50" letter-spacing="1.2" text-anchor="middle" stroke="#fff" stroke-width="2.2" stroke-opacity="0.75" paint-order="stroke">ARKANSAS</text>
<text x="902" y="472" font-family="Liberation Sans" font-size="8.6" font-weight="normal" fill="#4a4d50" letter-spacing="1.2" text-anchor="middle" stroke="#fff" stroke-width="2.2" stroke-opacity="0.75" paint-order="stroke">MISSISSIPPI</text>
<text x="1012" y="468" font-family="Liberation Sans" font-size="8.6" font-weight="normal" fill="#4a4d50" letter-spacing="1.2" text-anchor="middle" stroke="#fff" stroke-width="2.2" stroke-opacity="0.75" paint-order="stroke">SOUTH</text>
<text x="1007" y="478" font-family="Liberation Sans" font-size="8.6" font-weight="normal" fill="#4a4d50" letter-spacing="1.2" text-anchor="middle" stroke="#fff" stroke-width="2.2" stroke-opacity="0.75" paint-order="stroke">CAROLINA</text>
<text x="935" y="487" font-family="Liberation Sans" font-size="8.6" font-weight="normal" fill="#4a4d50" letter-spacing="1.2" text-anchor="middle" stroke="#fff" stroke-width="2.2" stroke-opacity="0.75" paint-order="stroke">ALABAMA</text>
<text x="960" y="500" font-family="Liberation Sans" font-size="8.6" font-weight="normal" fill="#4a4d50" letter-spacing="1.2" text-anchor="middle" stroke="#fff" stroke-width="2.2" stroke-opacity="0.75" paint-order="stroke">GEORGIA</text>
<text x="800" y="501" font-family="Liberation Sans" font-size="8.6" font-weight="normal" fill="#4a4d50" letter-spacing="1.2" text-anchor="middle" stroke="#fff" stroke-width="2.2" stroke-opacity="0.75" paint-order="stroke">TEXAS</text>
<text x="878" y="517" font-family="Liberation Sans" font-size="8.6" font-weight="normal" fill="#4a4d50" letter-spacing="1.2" text-anchor="middle" stroke="#fff" stroke-width="2.2" stroke-opacity="0.75" paint-order="stroke">LOUISIANA</text>
<text x="1136" y="304" font-family="Liberation Sans" font-size="8.6" font-weight="normal" fill="#4a4d50" letter-spacing="1.2" text-anchor="middle" stroke="#fff" stroke-width="2.2" stroke-opacity="0.75" paint-order="stroke">MAINE</text>
<text x="1170" y="273" font-family="Liberation Sans" font-size="8.6" font-weight="normal" fill="#4a4d50" letter-spacing="1.2" text-anchor="middle" stroke="#fff" stroke-width="2.2" stroke-opacity="0.75" paint-order="stroke">NB</text>
<text x="1209" y="285" font-family="Liberation Sans" font-size="8.6" font-weight="normal" fill="#4a4d50" letter-spacing="1.2" text-anchor="middle" stroke="#fff" stroke-width="2.2" stroke-opacity="0.75" paint-order="stroke">PE</text>
<text x="1200" y="309" font-family="Liberation Sans" font-size="8.6" font-weight="normal" fill="#4a4d50" letter-spacing="1.2" text-anchor="middle" stroke="#fff" stroke-width="2.2" stroke-opacity="0.75" paint-order="stroke">NOVA SCOTIA</text>
<text x="1096" y="313" font-family="Liberation Sans" font-size="8.6" font-weight="normal" fill="#4a4d50" letter-spacing="1.2" text-anchor="middle" stroke="#fff" stroke-width="2.2" stroke-opacity="0.75" paint-order="stroke">VT</text>
<text x="1104" y="329" font-family="Liberation Sans" font-size="8.6" font-weight="normal" fill="#4a4d50" letter-spacing="1.2" text-anchor="middle" stroke="#fff" stroke-width="2.2" stroke-opacity="0.75" paint-order="stroke">NH</text>
<text x="1108" y="357" font-family="Liberation Sans" font-size="8.6" font-weight="normal" fill="#4a4d50" letter-spacing="1.2" text-anchor="middle" stroke="#fff" stroke-width="2.2" stroke-opacity="0.75" paint-order="stroke">CT RI</text>
<text x="1040" y="370" font-family="Liberation Sans" font-size="8.6" font-weight="normal" fill="#4a4d50" letter-spacing="1.2" text-anchor="middle" stroke="#fff" stroke-width="2.2" stroke-opacity="0.75" paint-order="stroke">PE</text>
<text x="768" y="388" font-family="Liberation Sans" font-size="17.5" font-weight="bold" fill="#1f1f1f" letter-spacing="-0.3" text-anchor="middle" stroke="#fff" stroke-width="2.2" stroke-opacity="0.75" paint-order="stroke">United States</text>
<circle cx="521" cy="230" r="2.6" fill="#fff" stroke="#333" stroke-width="1"/>
<circle cx="529" cy="412" r="2.6" fill="#fff" stroke="#333" stroke-width="1"/>
<circle cx="611" cy="434" r="2.6" fill="#fff" stroke="#333" stroke-width="1"/>
<circle cx="575" cy="463" r="2.6" fill="#fff" stroke="#333" stroke-width="1"/>
<circle cx="589" cy="482" r="2.6" fill="#fff" stroke="#333" stroke-width="1"/>
<circle cx="819" cy="481" r="2.6" fill="#fff" stroke="#333" stroke-width="1"/>
<circle cx="837" cy="520" r="2.6" fill="#fff" stroke="#333" stroke-width="1"/>
<circle cx="925" cy="350" r="2.6" fill="#fff" stroke="#333" stroke-width="1"/>
<circle cx="1085" cy="293" r="2.6" fill="#fff" stroke="#333" stroke-width="1"/>
<circle cx="1021" cy="323" r="2.6" fill="#fff" stroke="#333" stroke-width="1"/>
<circle cx="1114" cy="343" r="2.6" fill="#fff" stroke="#333" stroke-width="1"/>
<circle cx="1080" cy="368" r="2.6" fill="#fff" stroke="#333" stroke-width="1"/>
<circle cx="1050" cy="395" r="2.6" fill="#fff" stroke="#333" stroke-width="1"/>
<text x="525" y="234" font-family="Liberation Sans" font-size="12.5" font-weight="normal" fill="#333" letter-spacing="-0.2" text-anchor="start" stroke="#fff" stroke-width="2.2" stroke-opacity="0.75" paint-order="stroke">Vancouver</text>
<text x="533" y="415" font-family="Liberation Sans" font-size="12.5" font-weight="normal" fill="#333" letter-spacing="-0.2" text-anchor="start" stroke="#fff" stroke-width="2.2" stroke-opacity="0.75" paint-order="stroke">San Francisco</text>
<text x="615" y="438" font-family="Liberation Sans" font-size="12.5" font-weight="normal" fill="#333" letter-spacing="-0.2" text-anchor="start" stroke="#fff" stroke-width="2.2" stroke-opacity="0.75" paint-order="stroke">Las Vegas</text>
<text x="572" y="467" font-family="Liberation Sans" font-size="12.5" font-weight="normal" fill="#333" letter-spacing="-0.2" text-anchor="end" stroke="#fff" stroke-width="2.2" stroke-opacity="0.75" paint-order="stroke">Los Angeles</text>
<text x="585" y="486" font-family="Liberation Sans" font-size="12.5" font-weight="normal" fill="#333" letter-spacing="-0.2" text-anchor="end" stroke="#fff" stroke-width="2.2" stroke-opacity="0.75" paint-order="stroke">San Diego</text>
<text x="822" y="485" font-family="Liberation Sans" font-size="12.5" font-weight="normal" fill="#333" letter-spacing="-0.2" text-anchor="start" stroke="#fff" stroke-width="2.2" stroke-opacity="0.75" paint-order="stroke">Dallas</text>
<text x="833" y="525" font-family="Liberation Sans" font-size="12.5" font-weight="normal" fill="#333" letter-spacing="-0.2" text-anchor="end" stroke="#fff" stroke-width="2.2" stroke-opacity="0.75" paint-order="stroke">Houston</text>
<text x="929" y="354" font-family="Liberation Sans" font-size="12.5" font-weight="normal" fill="#333" letter-spacing="-0.2" text-anchor="start" stroke="#fff" stroke-width="2.2" stroke-opacity="0.75" paint-order="stroke">Chicago</text>
<text x="1032" y="297" font-family="Liberation Sans" font-size="12.5" font-weight="normal" fill="#333" letter-spacing="-0.2" text-anchor="start" stroke="#fff" stroke-width="2.2" stroke-opacity="0.75" paint-order="stroke">Montreal</text>
<text x="1026" y="327" font-family="Liberation Sans" font-size="12.5" font-weight="normal" fill="#333" letter-spacing="-0.2" text-anchor="start" stroke="#fff" stroke-width="2.2" stroke-opacity="0.75" paint-order="stroke">Toronto</text>
<text x="1119" y="347" font-family="Liberation Sans" font-size="12.5" font-weight="normal" fill="#333" letter-spacing="-0.2" text-anchor="start" stroke="#fff" stroke-width="2.2" stroke-opacity="0.75" paint-order="stroke">Boston</text>
<text x="1085" y="372" font-family="Liberation Sans" font-size="12.5" font-weight="normal" fill="#333" letter-spacing="-0.2" text-anchor="start" stroke="#fff" stroke-width="2.2" stroke-opacity="0.75" paint-order="stroke">New York</text>
<text x="1051" y="399" font-family="Liberation Sans" font-size="12.5" font-weight="normal" fill="#333" letter-spacing="-0.2" text-anchor="start" stroke="#fff" stroke-width="2.2" stroke-opacity="0.75" paint-order="stroke">Washington</text>
<circle cx="528.8" cy="395" r="14.5" fill="url(#clg)"/>
<circle cx="1067.5" cy="359.3" r="14.5" fill="url(#clg)"/>
<path d="M531.7 258.8 C529.2 251.8 522.7 248.8 522.7 243.8 A9.0 9.0 0 0 1 540.7 243.8 C540.7 248.8 534.2 251.8 531.7 258.8 Z" fill="#ff5722" stroke="#fff" stroke-width="0.9"/>
<path d="M517.0 282.7 C514.5 275.7 508.0 272.7 508.0 267.7 A9.0 9.0 0 0 1 526.0 267.7 C526.0 272.7 519.5 275.7 517.0 282.7 Z" fill="#ff5722" stroke="#fff" stroke-width="0.9"/>
<path d="M575.7 462.0 C573.2 455.0 566.7 452.0 566.7 447.0 A9.0 9.0 0 0 1 584.7 447.0 C584.7 452.0 578.2 455.0 575.7 462.0 Z" fill="#ff5722" stroke="#fff" stroke-width="0.9"/>
<path d="M661.5 491.6 C659.0 484.6 652.5 481.6 652.5 476.6 A9.0 9.0 0 0 1 670.5 476.6 C670.5 481.6 664.0 484.6 661.5 491.6 Z" fill="#ff5722" stroke="#fff" stroke-width="0.9"/>
<path d="M684.6 424.5 C682.1 417.5 675.6 414.5 675.6 409.5 A9.0 9.0 0 0 1 693.6 409.5 C693.6 414.5 687.1 417.5 684.6 424.5 Z" fill="#ff5722" stroke="#fff" stroke-width="0.9"/>
<path d="M714.6 435.5 C712.1 428.5 705.6 425.5 705.6 420.5 A9.0 9.0 0 0 1 723.6 420.5 C723.6 425.5 717.1 428.5 714.6 435.5 Z" fill="#1a73d9" stroke="#fff" stroke-width="0.9"/>
<path d="M730.7 380.9 C728.2 373.9 721.7 370.9 721.7 365.9 A9.0 9.0 0 0 1 739.7 365.9 C739.7 370.9 733.2 373.9 730.7 380.9 Z" fill="#ff5722" stroke="#fff" stroke-width="0.9"/>
<path d="M764.5 361.8 C762.0 354.8 755.5 351.8 755.5 346.8 A9.0 9.0 0 0 1 773.5 346.8 C773.5 351.8 767.0 354.8 764.5 361.8 Z" fill="#ff5722" stroke="#fff" stroke-width="0.9"/>
<path d="M780.6 319.3 C778.1 312.3 771.6 309.3 771.6 304.3 A9.0 9.0 0 0 1 789.6 304.3 C789.6 309.3 783.1 312.3 780.6 319.3 Z" fill="#1a73d9" stroke="#fff" stroke-width="0.9"/>
<path d="M778.4 293.6 C775.9 286.6 769.4 283.6 769.4 278.6 A9.0 9.0 0 0 1 787.4 278.6 C787.4 283.6 780.9 286.6 778.4 293.6 Z" fill="#ff5722" stroke="#fff" stroke-width="0.9"/>
<path d="M797.0 251.5 C794.5 244.5 788.0 241.5 788.0 236.5 A9.0 9.0 0 0 1 806.0 236.5 C806.0 241.5 799.5 244.5 797.0 251.5 Z" fill="#ff5722" stroke="#fff" stroke-width="0.9"/>
<path d="M796.4 368.8 C793.9 361.8 787.4 358.8 787.4 353.8 A9.0 9.0 0 0 1 805.4 353.8 C805.4 358.8 798.9 361.8 796.4 368.8 Z" fill="#ff5722" stroke="#fff" stroke-width="0.9"/>
<path d="M810.9 385.3 C808.4 378.3 801.9 375.3 801.9 370.3 A9.0 9.0 0 0 1 819.9 370.3 C819.9 375.3 813.4 378.3 810.9 385.3 Z" fill="#ff5722" stroke="#fff" stroke-width="0.9"/>
<path d="M790.9 396.3 C788.4 389.3 781.9 386.3 781.9 381.3 A9.0 9.0 0 0 1 799.9 381.3 C799.9 386.3 793.4 389.3 790.9 396.3 Z" fill="#ff5722" stroke="#fff" stroke-width="0.9"/>
<path d="M781.7 458.6 C779.2 451.6 772.7 448.6 772.7 443.6 A9.0 9.0 0 0 1 790.7 443.6 C790.7 448.6 784.2 451.6 781.7 458.6 Z" fill="#ff5722" stroke="#fff" stroke-width="0.9"/>
<path d="M773.3 483.2 C770.8 476.2 764.3 473.2 764.3 468.2 A9.0 9.0 0 0 1 782.3 468.2 C782.3 473.2 775.8 476.2 773.3 483.2 Z" fill="#ff5722" stroke="#fff" stroke-width="0.9"/>
<path d="M788.3 478.8 C785.8 471.8 779.3 468.8 779.3 463.8 A9.0 9.0 0 0 1 797.3 463.8 C797.3 468.8 790.8 471.8 788.3 478.8 Z" fill="#ff5722" stroke="#fff" stroke-width="0.9"/>
<path d="M792.0 444.0 C789.5 437.0 783.0 434.0 783.0 429.0 A9.0 9.0 0 0 1 801.0 429.0 C801.0 434.0 794.5 437.0 792.0 444.0 Z" fill="#1a73d9" stroke="#fff" stroke-width="0.9"/>
<path d="M806.5 458.6 C804.0 451.6 797.5 448.6 797.5 443.6 A9.0 9.0 0 0 1 815.5 443.6 C815.5 448.6 809.0 451.6 806.5 458.6 Z" fill="#1a73d9" stroke="#fff" stroke-width="0.9"/>
<path d="M824.8 440.3 C822.3 433.3 815.8 430.3 815.8 425.3 A9.0 9.0 0 0 1 833.8 425.3 C833.8 430.3 827.3 433.3 824.8 440.3 Z" fill="#ff5722" stroke="#fff" stroke-width="0.9"/>
<path d="M789.0 546.6 C786.5 539.6 780.0 536.6 780.0 531.6 A9.0 9.0 0 0 1 798.0 531.6 C798.0 536.6 791.5 539.6 789.0 546.6 Z" fill="#ff5722" stroke="#fff" stroke-width="0.9"/>
<path d="M809.8 515.4 C807.3 508.4 800.8 505.4 800.8 500.4 A9.0 9.0 0 0 1 818.8 500.4 C818.8 505.4 812.3 508.4 809.8 515.4 Z" fill="#ff5722" stroke="#fff" stroke-width="0.9"/>
<path d="M835.8 517.3 C833.3 510.3 826.8 507.3 826.8 502.3 A9.0 9.0 0 0 1 844.8 502.3 C844.8 507.3 838.3 510.3 835.8 517.3 Z" fill="#ff5722" stroke="#fff" stroke-width="0.9"/>
<path d="M853.0 275.3 C850.5 268.3 844.0 265.3 844.0 260.3 A9.0 9.0 0 0 1 862.0 260.3 C862.0 265.3 855.5 268.3 853.0 275.3 Z" fill="#ff5722" stroke="#fff" stroke-width="0.9"/>
<path d="M850.9 293.6 C848.4 286.6 841.9 283.6 841.9 278.6 A9.0 9.0 0 0 1 859.9 278.6 C859.9 283.6 853.4 286.6 850.9 293.6 Z" fill="#ff5722" stroke="#fff" stroke-width="0.9"/>
<path d="M860.7 398.9 C858.2 391.9 851.7 388.9 851.7 383.9 A9.0 9.0 0 0 1 869.7 383.9 C869.7 388.9 863.2 391.9 860.7 398.9 Z" fill="#ff5722" stroke="#fff" stroke-width="0.9"/>
<path d="M887.9 396.3 C885.4 389.3 878.9 386.3 878.9 381.3 A9.0 9.0 0 0 1 896.9 381.3 C896.9 386.3 890.4 389.3 887.9 396.3 Z" fill="#ff5722" stroke="#fff" stroke-width="0.9"/>
<path d="M907.7 394.5 C905.2 387.5 898.7 384.5 898.7 379.5 A9.0 9.0 0 0 1 916.7 379.5 C916.7 384.5 910.2 387.5 907.7 394.5 Z" fill="#ff5722" stroke="#fff" stroke-width="0.9"/>
<path d="M920.9 345.0 C918.4 338.0 911.9 335.0 911.9 330.0 A9.0 9.0 0 0 1 929.9 330.0 C929.9 335.0 923.4 338.0 920.9 345.0 Z" fill="#ff5722" stroke="#fff" stroke-width="0.9"/>
<path d="M946.5 335.8 C944.0 328.8 937.5 325.8 937.5 320.8 A9.0 9.0 0 0 1 955.5 320.8 C955.5 325.8 949.0 328.8 946.5 335.8 Z" fill="#ff5722" stroke="#fff" stroke-width="0.9"/>
<path d="M944.7 360.4 C942.2 353.4 935.7 350.4 935.7 345.4 A9.0 9.0 0 0 1 953.7 345.4 C953.7 350.4 947.2 353.4 944.7 360.4 Z" fill="#ff5722" stroke="#fff" stroke-width="0.9"/>
<path d="M945.8 385.3 C943.3 378.3 936.8 375.3 936.8 370.3 A9.0 9.0 0 0 1 954.8 370.3 C954.8 375.3 948.3 378.3 945.8 385.3 Z" fill="#ff5722" stroke="#fff" stroke-width="0.9"/>
<path d="M959.4 403.6 C956.9 396.6 950.4 393.6 950.4 388.6 A9.0 9.0 0 0 1 968.4 388.6 C968.4 393.6 961.9 396.6 959.4 403.6 Z" fill="#e91e63" stroke="#fff" stroke-width="0.9"/>
<path d="M962.7 412.8 C960.2 405.8 953.7 402.8 953.7 397.8 A9.0 9.0 0 0 1 971.7 397.8 C971.7 402.8 965.2 405.8 962.7 412.8 Z" fill="#ff5722" stroke="#fff" stroke-width="0.9"/>
<path d="M977.0 374.3 C974.5 367.3 968.0 364.3 968.0 359.3 A9.0 9.0 0 0 1 986.0 359.3 C986.0 364.3 979.5 367.3 977.0 374.3 Z" fill="#1a73d9" stroke="#fff" stroke-width="0.9"/>
<path d="M990.9 358.5 C988.4 351.5 981.9 348.5 981.9 343.5 A9.0 9.0 0 0 1 999.9 343.5 C999.9 348.5 993.4 351.5 990.9 358.5 Z" fill="#8bc34a" stroke="#fff" stroke-width="0.9"/>
<path d="M1005.5 350.5 C1003.0 343.5 996.5 340.5 996.5 335.5 A9.0 9.0 0 0 1 1014.5 335.5 C1014.5 340.5 1008.0 343.5 1005.5 350.5 Z" fill="#1a73d9" stroke="#fff" stroke-width="0.9"/>
<path d="M901.8 451.3 C899.3 444.3 892.8 441.3 892.8 436.3 A9.0 9.0 0 0 1 910.8 436.3 C910.8 441.3 904.3 444.3 901.8 451.3 Z" fill="#ff5722" stroke="#fff" stroke-width="0.9"/>
<path d="M903.6 452.3 C901.1 445.3 894.6 442.3 894.6 437.3 A9.0 9.0 0 0 1 912.6 437.3 C912.6 442.3 906.1 445.3 903.6 452.3 Z" fill="#1a73d9" stroke="#fff" stroke-width="0.9"/>
<path d="M963.7 466.0 C961.2 459.0 954.7 456.0 954.7 451.0 A9.0 9.0 0 0 1 972.7 451.0 C972.7 456.0 966.2 459.0 963.7 466.0 Z" fill="#1a73d9" stroke="#fff" stroke-width="0.9"/>
<path d="M992.7 471.4 C990.2 464.4 983.7 461.4 983.7 456.4 A9.0 9.0 0 0 1 1001.7 456.4 C1001.7 461.4 995.2 464.4 992.7 471.4 Z" fill="#1a73d9" stroke="#fff" stroke-width="0.9"/>
<path d="M981.3 442.0 C978.8 435.0 972.3 432.0 972.3 427.0 A9.0 9.0 0 0 1 990.3 427.0 C990.3 432.0 983.8 435.0 981.3 442.0 Z" fill="#ff5722" stroke="#fff" stroke-width="0.9"/>
<path d="M989.8 445.8 C987.3 438.8 980.8 435.8 980.8 430.8 A9.0 9.0 0 0 1 998.8 430.8 C998.8 435.8 992.3 438.8 989.8 445.8 Z" fill="#ff5722" stroke="#fff" stroke-width="0.9"/>
<path d="M1011.8 431.0 C1009.3 424.0 1002.8 421.0 1002.8 416.0 A9.0 9.0 0 0 1 1020.8 416.0 C1020.8 421.0 1014.3 424.0 1011.8 431.0 Z" fill="#1a73d9" stroke="#fff" stroke-width="0.9"/>
<path d="M1006.3 442.0 C1003.8 435.0 997.3 432.0 997.3 427.0 A9.0 9.0 0 0 1 1015.3 427.0 C1015.3 432.0 1008.8 435.0 1006.3 442.0 Z" fill="#ff5722" stroke="#fff" stroke-width="0.9"/>
<path d="M1020.2 434.8 C1017.7 427.8 1011.2 424.8 1011.2 419.8 A9.0 9.0 0 0 1 1029.2 419.8 C1029.2 424.8 1022.7 427.8 1020.2 434.8 Z" fill="#43a047" stroke="#fff" stroke-width="0.9"/>
<path d="M994.5 449.4 C992.0 442.4 985.5 439.4 985.5 434.4 A9.0 9.0 0 0 1 1003.5 434.4 C1003.5 439.4 997.0 442.4 994.5 449.4 Z" fill="#1a73d9" stroke="#fff" stroke-width="0.9"/>
<path d="M895.6 502.6 C893.1 495.6 886.6 492.6 886.6 487.6 A9.0 9.0 0 0 1 904.6 487.6 C904.6 492.6 898.1 495.6 895.6 502.6 Z" fill="#ff5722" stroke="#fff" stroke-width="0.9"/>
<path d="M931.1 515.4 C928.6 508.4 922.1 505.4 922.1 500.4 A9.0 9.0 0 0 1 940.1 500.4 C940.1 505.4 933.6 508.4 931.1 515.4 Z" fill="#1a73d9" stroke="#fff" stroke-width="0.9"/>
<path d="M948.7 502.6 C946.2 495.6 939.7 492.6 939.7 487.6 A9.0 9.0 0 0 1 957.7 487.6 C957.7 492.6 951.2 495.6 948.7 502.6 Z" fill="#ff5722" stroke="#fff" stroke-width="0.9"/>
<path d="M977.7 513.6 C975.2 506.6 968.7 503.6 968.7 498.6 A9.0 9.0 0 0 1 986.7 498.6 C986.7 503.6 980.2 506.6 977.7 513.6 Z" fill="#1a73d9" stroke="#fff" stroke-width="0.9"/>
<path d="M994.2 513.6 C991.7 506.6 985.2 503.6 985.2 498.6 A9.0 9.0 0 0 1 1003.2 498.6 C1003.2 503.6 996.7 506.6 994.2 513.6 Z" fill="#ff5722" stroke="#fff" stroke-width="0.9"/>
<path d="M979.9 542.9 C977.4 535.9 970.9 532.9 970.9 527.9 A9.0 9.0 0 0 1 988.9 527.9 C988.9 532.9 982.4 535.9 979.9 542.9 Z" fill="#1a73d9" stroke="#fff" stroke-width="0.9"/>
<path d="M1062.0 334.0 C1059.5 327.0 1053.0 324.0 1053.0 319.0 A9.0 9.0 0 0 1 1071.0 319.0 C1071.0 324.0 1064.5 327.0 1062.0 334.0 Z" fill="#03a9f4" stroke="#fff" stroke-width="0.9"/>
<path d="M1038.5 345.0 C1036.0 338.0 1029.5 335.0 1029.5 330.0 A9.0 9.0 0 0 1 1047.5 330.0 C1047.5 335.0 1041.0 338.0 1038.5 345.0 Z" fill="#ff5722" stroke="#fff" stroke-width="0.9"/>
<path d="M1057.6 348.6 C1055.1 341.6 1048.6 338.6 1048.6 333.6 A9.0 9.0 0 0 1 1066.6 333.6 C1066.6 338.6 1060.1 341.6 1057.6 348.6 Z" fill="#ff5722" stroke="#fff" stroke-width="0.9"/>
<path d="M1083.3 339.5 C1080.8 332.5 1074.3 329.5 1074.3 324.5 A9.0 9.0 0 0 1 1092.3 324.5 C1092.3 329.5 1085.8 332.5 1083.3 339.5 Z" fill="#ff5722" stroke="#fff" stroke-width="0.9"/>
<path d="M1079.6 348.6 C1077.1 341.6 1070.6 338.6 1070.6 333.6 A9.0 9.0 0 0 1 1088.6 333.6 C1088.6 338.6 1082.1 341.6 1079.6 348.6 Z" fill="#ff5722" stroke="#fff" stroke-width="0.9"/>
<path d="M1101.6 348.6 C1099.1 341.6 1092.6 338.6 1092.6 333.6 A9.0 9.0 0 0 1 1110.6 333.6 C1110.6 338.6 1104.1 341.6 1101.6 348.6 Z" fill="#ff5722" stroke="#fff" stroke-width="0.9"/>
<path d="M1097.9 350.5 C1095.4 343.5 1088.9 340.5 1088.9 335.5 A9.0 9.0 0 0 1 1106.9 335.5 C1106.9 340.5 1100.4 343.5 1097.9 350.5 Z" fill="#ff5722" stroke="#fff" stroke-width="0.9"/>
<path d="M1094.3 354.1 C1091.8 347.1 1085.3 344.1 1085.3 339.1 A9.0 9.0 0 0 1 1103.3 339.1 C1103.3 344.1 1096.8 347.1 1094.3 354.1 Z" fill="#ff5722" stroke="#fff" stroke-width="0.9"/>
<path d="M1044.0 376.1 C1041.5 369.1 1035.0 366.1 1035.0 361.1 A9.0 9.0 0 0 1 1053.0 361.1 C1053.0 366.1 1046.5 369.1 1044.0 376.1 Z" fill="#ff5722" stroke="#fff" stroke-width="0.9"/>
<path d="M1059.4 378.0 C1056.9 371.0 1050.4 368.0 1050.4 363.0 A9.0 9.0 0 0 1 1068.4 363.0 C1068.4 368.0 1061.9 371.0 1059.4 378.0 Z" fill="#1a73d9" stroke="#fff" stroke-width="0.9"/>
<path d="M1032.0 407.3 C1029.5 400.3 1023.0 397.3 1023.0 392.3 A9.0 9.0 0 0 1 1041.0 392.3 C1041.0 397.3 1034.5 400.3 1032.0 407.3 Z" fill="#1a73d9" stroke="#fff" stroke-width="0.9"/>
<path d="M1042.9 392.6 C1040.4 385.6 1033.9 382.6 1033.9 377.6 A9.0 9.0 0 0 1 1051.9 377.6 C1051.9 382.6 1045.4 385.6 1042.9 392.6 Z" fill="#ff5722" stroke="#fff" stroke-width="0.9"/>
<path d="M1043.7 407.3 C1041.2 400.3 1034.7 397.3 1034.7 392.3 A9.0 9.0 0 0 1 1052.7 392.3 C1052.7 397.3 1046.2 400.3 1043.7 407.3 Z" fill="#ff5722" stroke="#fff" stroke-width="0.9"/>
<path d="M1057.6 392.6 C1055.1 385.6 1048.6 382.6 1048.6 377.6 A9.0 9.0 0 0 1 1066.6 377.6 C1066.6 382.6 1060.1 385.6 1057.6 392.6 Z" fill="#ff5722" stroke="#fff" stroke-width="0.9"/>
<path d="M1043.0 416.5 C1040.5 409.5 1034.0 406.5 1034.0 401.5 A9.0 9.0 0 0 1 1052.0 401.5 C1052.0 406.5 1045.5 409.5 1043.0 416.5 Z" fill="#ff5722" stroke="#fff" stroke-width="0.9"/>
<path d="M1052.5 420.1 C1050.0 413.1 1043.5 410.1 1043.5 405.1 A9.0 9.0 0 0 1 1061.5 405.1 C1061.5 410.1 1055.0 413.1 1052.5 420.1 Z" fill="#1a73d9" stroke="#fff" stroke-width="0.9"/>
<path d="M527.0 412.8 C524.5 405.8 518.0 402.8 518.0 397.8 A9.0 9.0 0 0 1 536.0 397.8 C536.0 402.8 529.5 405.8 527.0 412.8 Z" fill="#ff5722" stroke="#fff" stroke-width="0.9"/>
<g transform="translate(1061 353)"><path d="M1 6.5 L3 2 Q3.5 1 4.5 1 H10.5 Q11.5 1 12 2 L14 6.5 V11 H1 Z" fill="#17a33a"/><path d="M3.6 6 L4.8 2.8 H10.2 L11.4 6 Z" fill="#9fd4b0"/><rect x="1.5" y="10" width="2.6" height="3.5" rx="1" fill="#17a33a"/><rect x="10.9" y="10" width="2.6" height="3.5" rx="1" fill="#17a33a"/><circle cx="3.8" cy="8.3" r="1" fill="#dff"/><circle cx="11.2" cy="8.3" r="1" fill="#dff"/></g>
<text x="284" y="529" font-family="Liberation Sans" font-size="18.5" font-weight="bold" letter-spacing="-0.6" stroke="#fff" stroke-width="2.5" stroke-opacity="0.85" paint-order="stroke"><tspan fill="#4285f4">G</tspan><tspan fill="#ea4335">o</tspan><tspan fill="#fbbc05">o</tspan><tspan fill="#4285f4">g</tspan><tspan fill="#34a853">l</tspan><tspan fill="#ea4335">e</tspan></text>
<circle cx="1296" cy="492" r="20" fill="#fff"/>
<g fill="none" stroke="#555" stroke-width="1.8" stroke-linecap="round" stroke-linejoin="round"><path d="M1292 481 L1296 477 L1300 481"/><path d="M1292 503 L1296 507 L1300 503"/><path d="M1285 488 L1281 492 L1285 496"/><path d="M1307 488 L1311 492 L1307 496"/></g>
<rect x="1038" y="521" width="288" height="15" fill="#f5f5f5" opacity="0.8"/>
<rect x="1137" y="521" width="148" height="15" fill="#e7eef2" opacity="0.35"/>
<text x="1043" y="532" font-family="Liberation Sans" font-size="9.6" fill="#222">Keyboard shortcuts</text>
<text x="1143" y="532" font-family="Liberation Sans" font-size="9.6" fill="#cfd8dc" opacity="0.7">Map data ©2026 Google, INEGI</text>
<rect x="1286" y="522" width="1" height="13" fill="#ccc"/><text x="1292" y="532" font-family="Liberation Sans" font-size="9.6" fill="#222">Terms</text>
</svg>
  </div>
</div>

<!-- RIGHT TOP -->
<div class="card" style="left:1358px;top:186px;width:510px;height:55px"></div>
<div class="btn" style="left:1378px;width:90px;background:#dc3545"><svg width="12" height="12" viewBox="0 0 12 12" style="margin-right:3px"><path d="M4.6 0.3h2.8v4.3h4.3v2.8H7.4v4.3H4.6V7.4H0.3V4.6h4.3z" fill="#fff"/></svg>New Job</div>
<div class="btn" style="left:1518px;width:68px;background:#3dd5f3"><svg width="17" height="13" viewBox="0 0 20 15" style="margin-right:3px"><ellipse cx="7.5" cy="5.2" rx="7" ry="4.8" fill="#fff"/><path d="M1.5 10.5 L3 8 L5 9.5 Z" fill="#fff"/><path d="M15.8 5.5 C18.5 6.5 19.7 8.2 19.5 10 C19.3 11.6 18.3 12.7 17.3 13.3 L19 15 C16.5 15 14.5 14.4 13 13.6 C10.5 13.7 8 12.5 6.8 10.8 C12 10.8 15.8 8.5 15.8 5.5 Z" fill="#fff"/></svg>Chat</div>
<div class="btn" style="left:1636px;width:68px;background:#f5577b"><svg width="5" height="15" viewBox="0 0 5 15" style="margin-right:2px"><rect x="0.5" y="0.5" width="4" height="9.5" rx="1.5" fill="#fff"/><circle cx="2.5" cy="13" r="2" fill="#fff"/></svg>Issues</div>
<div class="btn" style="left:1754px;width:94px;background:#4fd69c"><svg width="17" height="14" viewBox="0 0 17 14" style="margin-right:3px"><rect x="0.5" y="0.5" width="16" height="13" rx="2" fill="#fff"/><rect x="0.5" y="3.5" width="16" height="2.5" fill="#4fd69c"/><rect x="2.5" y="9" width="3" height="1.5" fill="#4fd69c"/><rect x="7" y="9" width="4" height="1.5" fill="#4fd69c"/></svg>Payment</div>

<!-- ACTIVE JOB STATUS -->
<div class="card" style="left:1358px;top:358px;width:510px;height:198px">
  <div class="abs" style="left:19px;top:3px;font-size:16px;font-weight:bold;line-height:20px;color:#f4f4f4;white-space:nowrap;letter-spacing:-0.1px">Active Job Status</div>
  <div class="abs" style="left:0;top:27px;width:508px;height:1px;background:#2a2a2a"></div>
</div>
<div class="jb" style="left:1366px;border-color:#fd5c26;background:#3a211a;color:#fd5c26"><b>58</b><i>Request</i></div>
<div class="jb" style="left:1471px;border-color:#2a7de1;background:#17212d;color:#2a7de1"><b>19</b><i>Dispatched</i></div>
<div class="jb" style="left:1576px;border-color:#43a047;background:#1d281d;color:#43a047"><b>1</b><i>En</i></div>
<div class="jb" style="left:1680px;border-color:#2e8b36;background:#1c261c;color:#2e8b36"><b>0</b><i>On Scene</i></div>
<div class="jb" style="left:1785px;border-color:#12a8ee;background:#172430;color:#12a8ee"><b>1</b><i>In Progress</i></div>

<!-- JOBS CARD -->
<div class="card" style="left:274px;top:574px;width:1594px;height:252px;overflow:hidden">
  <div class="abs" style="left:19px;top:11px;font-size:20.3px;line-height:24px;color:#f4f4f4;white-space:nowrap;-webkit-text-stroke:0.45px #f4f4f4">All Active Jobs</div>
  <div class="abs" style="left:0;top:46px;width:1594px;height:1px;background:#262626"></div>
  <div class="abs" style="left:0;top:48px;width:1594px;height:68px;background:#c9cdd5;border-radius:20px 20px 0 0;border-bottom:2px solid #dbe8f5"></div>
  <div class="abs" style="left:0;top:182px;width:1594px;height:1px;background:#262626"></div>
</div>
<div class="sel" style="left:1204px;width:132px">Today</div>
<div class="sel" style="left:1341px;width:195px">All Teams</div>
<div class="sel" style="left:1541px;width:197px">All Statuses</div>
<div class="abs" style="left:1743px;top:582px;width:105px;height:31px;background:#dc3545;border-radius:4px;font-size:15px;line-height:31px;color:#fff;white-space:nowrap;padding-left:8px"><svg width="13" height="13" viewBox="0 0 12 12" style="margin-right:2px;vertical-align:-1px"><path d="M4.6 0.3h2.8v4.3h4.3v2.8H7.4v4.3H4.6V7.4H0.3V4.6h4.3z" fill="#fff"/></svg>Create Job</div>

<!-- table header labels -->
<div class="th" style="left:287px">ID<svg class="up" viewBox="0 0 10 6"><path d="M1 5.5 L5 1 L9 5.5Z" fill="#222"/></svg></div>
<div class="th" style="left:352px;top:637px">Created</div>
<svg class="srt" style="left:352px;top:659px" viewBox="0 0 10 14"><path d="M1 6 L5 1.5 L9 6Z M1 8 L5 12.5 L9 8Z" fill="#eef0f3"/></svg>
<div class="th" style="left:452px">Location<svg class="srt2" viewBox="0 0 10 14"><path d="M1 6 L5 1.5 L9 6Z M1 8 L5 12.5 L9 8Z" fill="#eef0f3"/></svg></div>
<div class="th" style="left:666px">Customer<svg class="srt2" viewBox="0 0 10 14"><path d="M1 6 L5 1.5 L9 6Z M1 8 L5 12.5 L9 8Z" fill="#eef0f3"/></svg></div>
<div class="th" style="left:789px">Issue<svg class="srt2" viewBox="0 0 10 14"><path d="M1 6 L5 1.5 L9 6Z M1 8 L5 12.5 L9 8Z" fill="#eef0f3"/></svg></div>
<div class="th" style="left:990px">Rescuer<svg class="srt2" viewBox="0 0 10 14"><path d="M1 6 L5 1.5 L9 6Z M1 8 L5 12.5 L9 8Z" fill="#eef0f3"/></svg></div>
<div class="th" style="left:1107px">Entered By<svg class="srt2" viewBox="0 0 10 14"><path d="M1 6 L5 1.5 L9 6Z M1 8 L5 12.5 L9 8Z" fill="#eef0f3"/></svg></div>
<div class="th" style="left:1239px">Team<svg class="srt2" viewBox="0 0 10 14"><path d="M1 6 L5 1.5 L9 6Z M1 8 L5 12.5 L9 8Z" fill="#eef0f3"/></svg></div>
<div class="th" style="left:1431px">Last Updated<svg class="srt2" viewBox="0 0 10 14"><path d="M1 6 L5 1.5 L9 6Z M1 8 L5 12.5 L9 8Z" fill="#eef0f3"/></svg></div>
<div class="th" style="left:1584px">Status<svg class="srt2" viewBox="0 0 10 14"><path d="M1 6 L5 1.5 L9 6Z M1 8 L5 12.5 L9 8Z" fill="#eef0f3"/></svg></div>
<div class="th" style="left:1754px">Actions</div>


<div class="rid" style="top:715px">#104</div>
<div class="r2" style="left:352px;top:705px">Feb 08, 12:37<br>AM</div>
<div class="r2" style="left:452px;top:705px">1 Stuart St, Binghamton, NY<br>13901,...</div>
<div class="r1" style="left:666px;top:716px">Ryan Furr</div>
<div class="r2" style="left:789px;top:705px">-Breakdown Location: 1<br>Stuart St, Binghamton, NY 1...</div>
<div class="r1" style="left:990px;top:716px;color:#ff2121">Unassigned</div>
<div class="r1" style="left:1107px;top:716px">-</div>
<div class="tsel" style="top:709px">-- None --</div>
<div class="r2" style="left:1431px;top:705px">Feb 08, 12:37 AM<br>System</div>
<div class="stb" style="top:712px">New Service Request<svg width="8" height="5" viewBox="0 0 8 5" style="margin-left:6px;vertical-align:2px"><path d="M0.5 0.5 L4 4.5 L7.5 0.5Z" fill="#fff"/></svg></div>
<div class="act" style="top:709px">
  <div class="ab" style="left:0;width:33px;border-color:#dc3545"><svg width="17" height="12" viewBox="0 0 17 12"><path d="M8.5 0.5 C4.5 0.5 1.7 3.3 0.5 6 C1.7 8.7 4.5 11.5 8.5 11.5 C12.5 11.5 15.3 8.7 16.5 6 C15.3 3.3 12.5 0.5 8.5 0.5 Z" fill="#fff"/><circle cx="8.5" cy="6" r="3.2" fill="#1a1a1a"/><circle cx="8.5" cy="6" r="1.6" fill="#fff"/></svg></div>
  <div class="ab" style="left:33px;width:33px;border-color:#4a4a4a"><svg width="16" height="15" viewBox="0 0 16 15"><path d="M11 2.5 H2.5 A1.5 1.5 0 0 0 1 4 V12.5 A1.5 1.5 0 0 0 2.5 14 H11 A1.5 1.5 0 0 0 12.5 12.5 V8" fill="none" stroke="#fff" stroke-width="1.8"/><path d="M13.3 0.8 L15.2 2.7 L8.5 9.4 L5.8 10.2 L6.6 7.5 Z" fill="#fff"/></svg></div>
  <div class="ab" style="left:66px;width:35px;border-color:#3bb77e"><svg width="20" height="15" viewBox="0 0 20 15"><circle cx="6.5" cy="3.8" r="3.5" fill="#fff"/><path d="M0.3 14.5 C0.3 10.3 2.5 8.3 6.5 8.3 C10.5 8.3 12.7 10.3 12.7 14.5 Z" fill="#fff"/><path d="M16 3.5 V10.5 M12.5 7 H19.5" stroke="#fff" stroke-width="2.2"/></svg></div>
</div>
<div class="abs" style="left:274px;top:757px;width:1594px;height:1px;background:#262626"></div>

<div class="rid" style="top:782px">#105</div>
<div class="r2" style="left:352px;top:772px">Feb 08, 12:41<br>AM</div>
<div class="r2" style="left:452px;top:772px">1 Stuart St, Binghamton, NY<br>13901,...</div>
<div class="r1" style="left:666px;top:783px">Ryan Furr</div>
<div class="r2" style="left:789px;top:772px">-Breakdown Location: 1<br>Stuart St, Binghamton, NY 1...</div>
<div class="r1" style="left:990px;top:783px;color:#ff2121">Unassigned</div>
<div class="r1" style="left:1107px;top:783px">-</div>
<div class="tsel" style="top:776px">-- None --</div>
<div class="r2" style="left:1431px;top:772px">Feb 08, 12:41 AM<br>System</div>
<div class="stb" style="top:779px">New Service Request<svg width="8" height="5" viewBox="0 0 8 5" style="margin-left:6px;vertical-align:2px"><path d="M0.5 0.5 L4 4.5 L7.5 0.5Z" fill="#fff"/></svg></div>
<div class="act" style="top:776px">
  <div class="ab" style="left:0;width:33px;border-color:#dc3545"><svg width="17" height="12" viewBox="0 0 17 12"><path d="M8.5 0.5 C4.5 0.5 1.7 3.3 0.5 6 C1.7 8.7 4.5 11.5 8.5 11.5 C12.5 11.5 15.3 8.7 16.5 6 C15.3 3.3 12.5 0.5 8.5 0.5 Z" fill="#fff"/><circle cx="8.5" cy="6" r="3.2" fill="#1a1a1a"/><circle cx="8.5" cy="6" r="1.6" fill="#fff"/></svg></div>
  <div class="ab" style="left:33px;width:33px;border-color:#4a4a4a"><svg width="16" height="15" viewBox="0 0 16 15"><path d="M11 2.5 H2.5 A1.5 1.5 0 0 0 1 4 V12.5 A1.5 1.5 0 0 0 2.5 14 H11 A1.5 1.5 0 0 0 12.5 12.5 V8" fill="none" stroke="#fff" stroke-width="1.8"/><path d="M13.3 0.8 L15.2 2.7 L8.5 9.4 L5.8 10.2 L6.6 7.5 Z" fill="#fff"/></svg></div>
  <div class="ab" style="left:66px;width:35px;border-color:#3bb77e"><svg width="20" height="15" viewBox="0 0 20 15"><circle cx="6.5" cy="3.8" r="3.5" fill="#fff"/><path d="M0.3 14.5 C0.3 10.3 2.5 8.3 6.5 8.3 C10.5 8.3 12.7 10.3 12.7 14.5 Z" fill="#fff"/><path d="M16 3.5 V10.5 M12.5 7 H19.5" stroke="#fff" stroke-width="2.2"/></svg></div>
</div>


<div class="card" style="left:274px;top:864px;width:1594px;height:60px"></div>

</body></html>
